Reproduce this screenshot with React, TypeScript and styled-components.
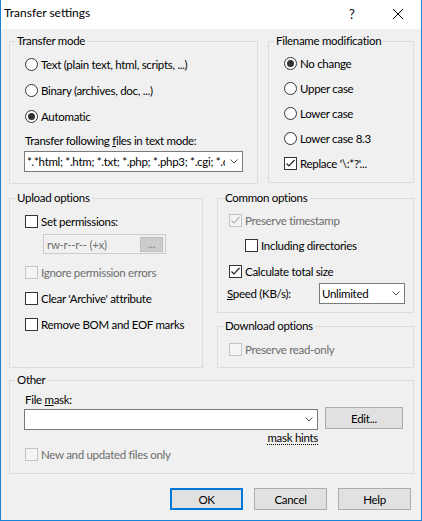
import React from 'react';
import styled, { createGlobalStyle, css } from 'styled-components';

const GlobalStyle = createGlobalStyle`
  html, body {
    margin: 0;
    padding: 0;
    background: #ffffff;
  }
  body {
    font-family: Lato, "Noto Sans", sans-serif;
    font-size: 11.5px;
    letter-spacing: -0.3px;
    color: #000000;
  }
  * {
    box-sizing: border-box;
  }
`;

const TEXT_MASK =
  '*.*html; *.htm; *.txt; *.php; *.php3; *.cgi; *.c; *.cpp; *.h; *.pas; *.bas; *.tex; *.pl; *.js; .htaccess; *.xtml; *.css; *.cfg; *.ini; *.sh; *.xml';

const Window = styled.div`
  width: 422px;
  height: 521px;
  display: flex;
  flex-direction: column;
  border: 1px solid #1883d7;
  border-top: none;
  background: #f0f0f0;
`;

const TitleBar = styled.div`
  height: 29px;
  flex: none;
  display: flex;
  align-items: flex-start;
  background: #ffffff;
`;

const Title = styled.div`
  flex: 1;
  padding: 5px 0 0 3px;
  line-height: 16px;
  font-size: 12px;
  letter-spacing: 0;
`;

const CaptionButton = styled.div`
  width: 46px;
  height: 27px;
  display: flex;
  align-items: center;
  justify-content: center;
  font-size: 13px;
  letter-spacing: 0;
`;

const Body = styled.div`
  flex: 1;
  display: flex;
  flex-direction: column;
  padding: 4px 7px 0 8px;
`;

const Row = styled.div<{ $cols: string; $gap: number; $mt: number }>`
  display: grid;
  grid-template-columns: ${p => p.$cols};
  column-gap: ${p => p.$gap}px;
  align-items: start;
  margin-top: ${p => p.$mt}px;
`;

const Stack = styled.div`
  display: flex;
  flex-direction: column;
  gap: 5px;
`;

const Group = styled.fieldset<{ $h: number }>`
  margin: 0;
  padding: 0;
  min-width: 0;
  height: ${p => p.$h}px;
  border: 1px solid #dcdcdc;
`;

const Caption = styled.legend`
  margin-left: 5px;
  padding: 0 2px;
  line-height: 16px;
`;

const GroupContent = styled.div<{ $pt: number; $pl: number }>`
  display: flex;
  flex-direction: column;
  align-items: flex-start;
  padding: ${p => p.$pt}px 0 0 ${p => p.$pl}px;
`;

const OptionRow = styled.label<{ $h: number; $indent?: number; $mt?: number; $disabled?: boolean }>`
  display: flex;
  align-items: center;
  gap: 3px;
  height: ${p => p.$h}px;
  margin-left: ${p => p.$indent ?? 0}px;
  margin-top: ${p => p.$mt ?? 0}px;
  white-space: nowrap;
  color: ${p => (p.$disabled ? '#6d6d6d' : '#000000')};
`;

const RadioCircle = styled.span<{ $checked?: boolean }>`
  width: 13px;
  height: 13px;
  flex: none;
  display: flex;
  align-items: center;
  justify-content: center;
  border: 1px solid #333333;
  border-radius: 50%;
  background: #ffffff;

  &::after {
    content: '';
    width: 7px;
    height: 7px;
    border-radius: 50%;
    background: #333333;
    display: ${p => (p.$checked ? 'block' : 'none')};
  }
`;

const CheckSquare = styled.span<{ $disabled?: boolean }>`
  width: 13px;
  height: 13px;
  flex: none;
  display: flex;
  align-items: center;
  justify-content: center;
  border: 1px solid ${p => (p.$disabled ? '#c4c4c4' : '#333333')};
  background: ${p => (p.$disabled ? '#f4f4f4' : '#ffffff')};
`;

const FieldLabel = styled.div<{ $mt?: number }>`
  line-height: 16px;
  margin-top: ${p => p.$mt ?? 0}px;
  white-space: nowrap;
`;

const Combo = styled.div<{ $w: number; $mt?: number; $ml?: number }>`
  width: ${p => p.$w}px;
  height: 21px;
  flex: none;
  display: flex;
  align-items: center;
  margin-top: ${p => p.$mt ?? 0}px;
  margin-left: ${p => p.$ml ?? 0}px;
  border: 1px solid #7a7a7a;
  background: #ffffff;
`;

const ComboText = styled.span`
  flex: 1;
  min-width: 0;
  overflow: hidden;
  white-space: nowrap;
  padding-left: 2px;
  line-height: 16px;
`;

const ComboArrow = styled.span`
  width: 17px;
  flex: none;
  display: flex;
  justify-content: center;
  align-items: center;
`;

const PermField = styled.div`
  width: 123px;
  height: 20px;
  margin-left: 18px;
  display: flex;
  align-items: center;
  padding: 0 2px 0 3px;
  border: 1px solid #cccccc;
  background: #f0f0f0;
  color: #6d6d6d;
  white-space: nowrap;
`;

const DotsButton = styled.span`
  margin-left: auto;
  width: 23px;
  height: 15px;
  display: flex;
  align-items: center;
  justify-content: center;
  border: 1px solid #bfbfbf;
  background: #cccccc;
  color: #838383;
  line-height: 12px;
`;

const SpeedRow = styled.div`
  display: flex;
  align-items: center;
  height: 21px;
  margin-top: -1px;
  margin-left: -2px;
`;

const SpeedLabel = styled.span`
  width: 92px;
  flex: none;
`;

const MaskRow = styled.div`
  display: flex;
  align-items: flex-start;
  height: 22px;
`;

const HintLine = styled.div`
  width: 294px;
  margin: 1px 0 0 -1px;
  text-align: right;
  line-height: 14px;
`;

const HintLink = styled.span`
  text-decoration: underline dotted;
  text-underline-offset: 2px;
`;

const PushButton = styled.button<{ $w: number; $h: number; $default?: boolean; $mt?: number; $ml?: number }>`
  width: ${p => p.$w}px;
  height: ${p => p.$h}px;
  flex: none;
  margin: ${p => p.$mt ?? 0}px 0 0 ${p => p.$ml ?? 0}px;
  padding: 0;
  font: inherit;
  letter-spacing: inherit;
  color: #000000;
  background: #e1e1e1;
  border: 1px solid #adadad;
  ${p =>
    p.$default &&
    css`
      border: 2px solid #0078d7;
    `}
`;

const ButtonBar = styled.div`
  display: flex;
  justify-content: flex-end;
  gap: 11px;
  margin-top: 14px;
  padding-right: 3px;
`;

const Chevron = () => (
  <svg width="8" height="5" viewBox="0 0 8 5">
    <polyline points="0.5,0.5 4,4 7.5,0.5" fill="none" stroke="#555" strokeWidth="1" />
  </svg>
);

const Tick = ({ color }: { color: string }) => (
  <svg width="11" height="11" viewBox="0 0 11 11">
    <polyline points="1.5,5.5 4,8 9.5,2" fill="none" stroke={color} strokeWidth="1.2" />
  </svg>
);

const Radio = ({ label, checked, h }: { label: string; checked?: boolean; h: number }) => (
  <OptionRow $h={h}>
    <RadioCircle $checked={checked} />
    <span>{label}</span>
  </OptionRow>
);

interface CheckProps {
  label: string;
  h: number;
  checked?: boolean;
  disabled?: boolean;
  indent?: number;
  mt?: number;
}

const Check = ({ label, h, checked, disabled, indent, mt }: CheckProps) => (
  <OptionRow $h={h} $indent={indent} $mt={mt} $disabled={disabled}>
    <CheckSquare $disabled={disabled}>
      {checked && <Tick color={disabled ? '#b4b4b4' : '#222'} />}
    </CheckSquare>
    <span>{label}</span>
  </OptionRow>
);

export default function App() {
  return (
    <>
      <GlobalStyle />
      <Window>
        <TitleBar>
          <Title>Transfer settings</Title>
          <CaptionButton>?</CaptionButton>
          <CaptionButton>
            <svg width="10" height="10" viewBox="0 0 10 10">
              <path d="M0 0 L10 10 M10 0 L0 10" stroke="#000" strokeWidth="1" />
            </svg>
          </CaptionButton>
        </TitleBar>

        <Body>
          <Row $cols="249px 146px" $gap={10} $mt={0}>
            <Group $h={151}>
              <Caption>Transfer mode</Caption>
              <GroupContent $pt={2} $pl={15}>
                <Radio h={26} label="Text (plain text, html, scripts, ...)" />
                <Radio h={26} label="Binary (archives, doc, ...)" />
                <Radio h={26} label="Automatic" checked />
                <FieldLabel $mt={4}>
                  Transfer following <u>f</u>iles in text mode:
                </FieldLabel>
                <Combo $w={219} $mt={2} $ml={-1}>
                  <ComboText>{TEXT_MASK}</ComboText>
                  <ComboArrow>
                    <Chevron />
                  </ComboArrow>
                </Combo>
              </GroupContent>
            </Group>

            <Group $h={150}>
              <Caption>Filename modification</Caption>
              <GroupContent $pt={2} $pl={15}>
                <Radio h={25} label="No change" checked />
                <Radio h={25} label="Upper case" />
                <Radio h={25} label="Lower case" />
                <Radio h={25} label="Lower case 8.3" />
                <Check h={25} label={"Replace '\\:*?'..."} checked />
              </GroupContent>
            </Group>
          </Row>

          <Row $cols="194px 197px" $gap={14} $mt={6}>
            <Group $h={178}>
              <Caption>Upload options</Caption>
              <GroupContent $pt={2} $pl={15}>
                <Check h={26} label="Set permissions:" />
                <PermField>
                  rw-r--r-- (+x)
                  <DotsButton>...</DotsButton>
                </PermField>
                <Check h={26} mt={5} label="Ignore permission errors" disabled />
                <Check h={26} label="Clear 'Archive' attribute" />
                <Check h={26} label="Remove BOM and EOF marks" />
              </GroupContent>
            </Group>

            <Stack>
              <Group $h={123}>
                <Caption>Common options</Caption>
                <GroupContent $pt={2} $pl={11}>
                  <Check h={25} label="Preserve timestamp" checked disabled />
                  <Check h={25} indent={16} label="Including directories" />
                  <Check h={26} label="Calculate total size" checked />
                  <SpeedRow>
                    <SpeedLabel>
                      <u>S</u>peed (KB/s):
                    </SpeedLabel>
                    <Combo $w={86}>
                      <ComboText>Unlimited</ComboText>
                      <ComboArrow>
                        <Chevron />
                      </ComboArrow>
                    </Combo>
                  </SpeedRow>
                </GroupContent>
              </Group>

              <Group $h={50}>
                <Caption>Download options</Caption>
                <GroupContent $pt={2} $pl={11}>
                  <Check h={26} label="Preserve read-only" disabled />
                </GroupContent>
              </Group>
            </Stack>
          </Row>

          <Row $cols="405px" $gap={0} $mt={4}>
            <Group $h={102}>
              <Caption>Other</Caption>
              <GroupContent $pt={4} $pl={15}>
                <FieldLabel>
                  File <u>m</u>ask:
                </FieldLabel>
                <MaskRow>
                  <Combo $w={294} $mt={1} $ml={-1}>
                    <ComboText />
                    <ComboArrow>
                      <Chevron />
                    </ComboArrow>
                  </Combo>
                  <PushButton $w={78} $h={22} $mt={-1} $ml={7}>
                    Edit...
                  </PushButton>
                </MaskRow>
                <HintLine>
                  <HintLink>mask hints</HintLink>
                </HintLine>
                <Check h={18} label="New and updated files only" disabled />
              </GroupContent>
            </Group>
          </Row>

          <ButtonBar>
            <PushButton $w={73} $h={22} $default>
              OK
            </PushButton>
            <PushButton $w={73} $h={22}>
              Cancel
            </PushButton>
            <PushButton $w={73} $h={22}>
              Help
            </PushButton>
          </ButtonBar>
        </Body>
      </Window>
    </>
  );
}
